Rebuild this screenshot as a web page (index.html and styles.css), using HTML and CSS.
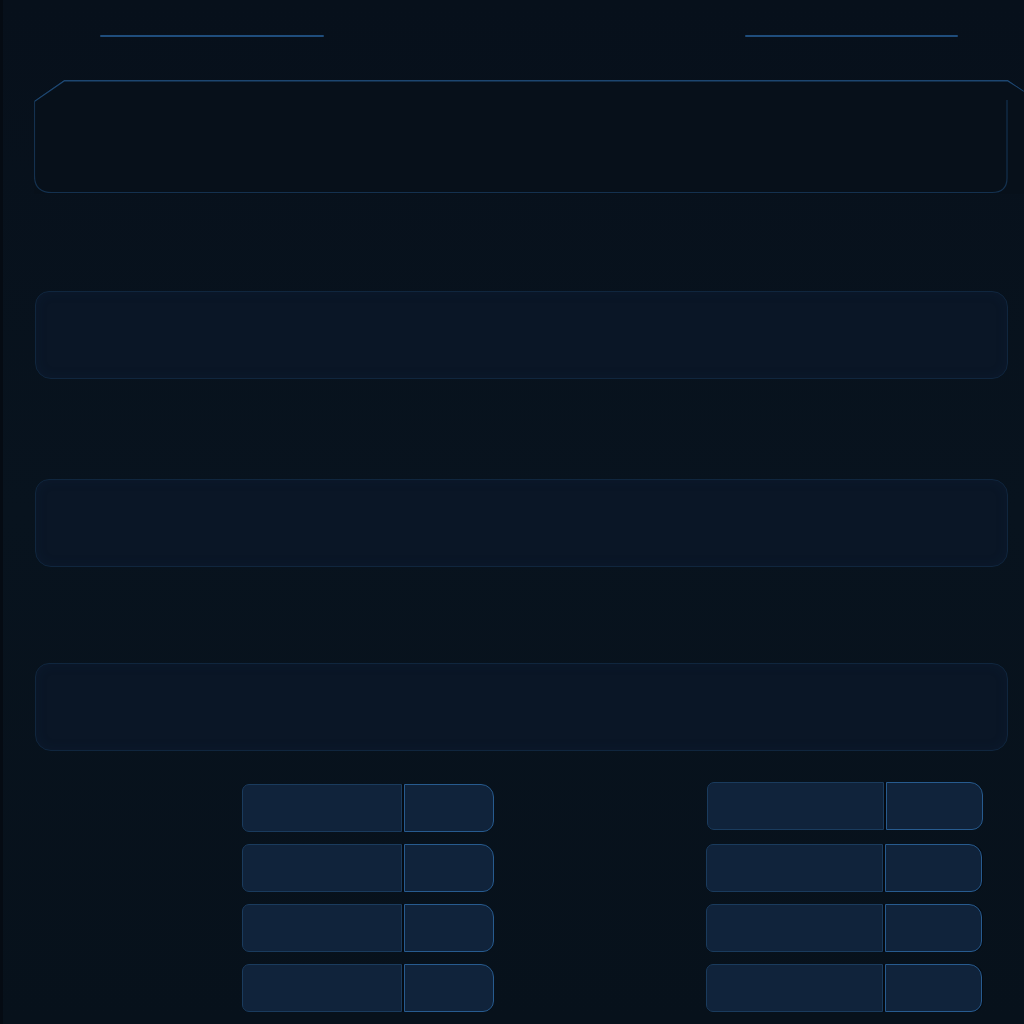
FILE: index.html
```html
<!DOCTYPE html>
<html lang="en">
<head>
<meta charset="utf-8">
<title>Panel</title>
<link rel="stylesheet" href="styles.css">
</head>
<body>
<div class="page">
  <div class="topbar">
    <div class="rule rule-left"></div>
    <div class="rule rule-right"></div>
  </div>
  <div class="header">
    <svg class="header-frame" width="990" height="114" viewBox="0 0 990 114" aria-hidden="true">
      <path d="M0.5 21 L30 0.8 L974 0.8 L990 11" fill="none" stroke="#1d4670" stroke-width="1.6"/>
      <path d="M0.5 21 L0.5 96 Q0.5 112.5 18 112.5 L958 112.5 Q973 112.5 973 98 L973 20" fill="none" stroke="#14314f" stroke-width="1.2"/>
    </svg>
  </div>
  <div class="panel panel-1"></div>
  <div class="panel panel-2"></div>
  <div class="panel panel-3"></div>
  <div class="controls">
    <div class="group group-left">
      <div class="btn"><div class="btn-main"></div><div class="btn-side"></div></div>
      <div class="btn"><div class="btn-main"></div><div class="btn-side"></div></div>
      <div class="btn"><div class="btn-main"></div><div class="btn-side"></div></div>
      <div class="btn"><div class="btn-main"></div><div class="btn-side"></div></div>
    </div>
    <div class="group group-right">
      <div class="btn"><div class="btn-main"></div><div class="btn-side"></div></div>
      <div class="btn"><div class="btn-main"></div><div class="btn-side"></div></div>
      <div class="btn"><div class="btn-main"></div><div class="btn-side"></div></div>
      <div class="btn"><div class="btn-main"></div><div class="btn-side"></div></div>
    </div>
  </div>
</div>
</body>
</html>
```

FILE: styles.css
```css
html, body {
  margin: 0;
  padding: 0;
  background: #08121d;
  font-family: "Liberation Sans", Arial, sans-serif;
  overflow: hidden;
}

.page {
  width: 1024px;
  height: 1024px;
  box-sizing: border-box;
  border-left: 3px solid #050b13;
  background: linear-gradient(180deg, #07101b 0%, #08131e 50%, #07111b 100%);
  display: flex;
  flex-direction: column;
}

.topbar {
  height: 80px;
  display: flex;
  justify-content: space-between;
  align-items: flex-start;
  padding: 35px 66px 0 97px;
  box-sizing: border-box;
}

.rule {
  height: 2px;
  background: #1f4d7c;
  border-radius: 1px;
}

.rule-left { width: 224px; }
.rule-right { width: 213px; }

.header {
  position: relative;
  margin-left: 31px;
  width: 990px;
  height: 114px;
  background: #07101a;
  clip-path: polygon(0 21px, 30px 0, 974px 0, 990px 11px, 990px 114px, 0 114px);
}

.header-frame {
  position: absolute;
  left: 0;
  top: 0;
}

.panel {
  margin-left: 32px;
  width: 973px;
  height: 88px;
  box-sizing: border-box;
  background: #0a1626;
  border: 1px solid #10263e;
  border-radius: 14px 16px 16px 16px;
  box-shadow: inset 0 0 12px rgba(20, 50, 85, 0.15);
}

.panel-1 { margin-top: 97px; }
.panel-2 { margin-top: 100px; }
.panel-3 { margin-top: 96px; }

.controls {
  display: flex;
  align-items: flex-start;
  margin-top: 31px;
}

.group {
  display: flex;
  flex-direction: column;
  gap: 12px;
}

.group-left {
  margin-left: 239px;
  margin-top: 2px;
}

.group-right {
  margin-left: 212px;
}

.btn {
  display: flex;
  height: 48px;
  gap: 2px;
  background: #040a12;
  border-radius: 7px 13px 11px 7px;
}

.btn-main {
  box-sizing: border-box;
  height: 48px;
  background: #10233b;
  border: 1px solid #1a3b5d;
  border-radius: 7px 0 0 7px;
}

.btn-side {
  box-sizing: border-box;
  height: 48px;
  background: #10233b;
  border: 1.5px solid #275b8f;
  border-radius: 0 13px 11px 0;
}

.group-left .btn-main { width: 160px; }
.group-left .btn-side { width: 90px; }

.group-right .btn-main { width: 177px; }
.group-right .btn-side { width: 97px; }

.group-right .btn:first-child {
  margin-left: 1px;
  margin-bottom: 2px;
}
```
